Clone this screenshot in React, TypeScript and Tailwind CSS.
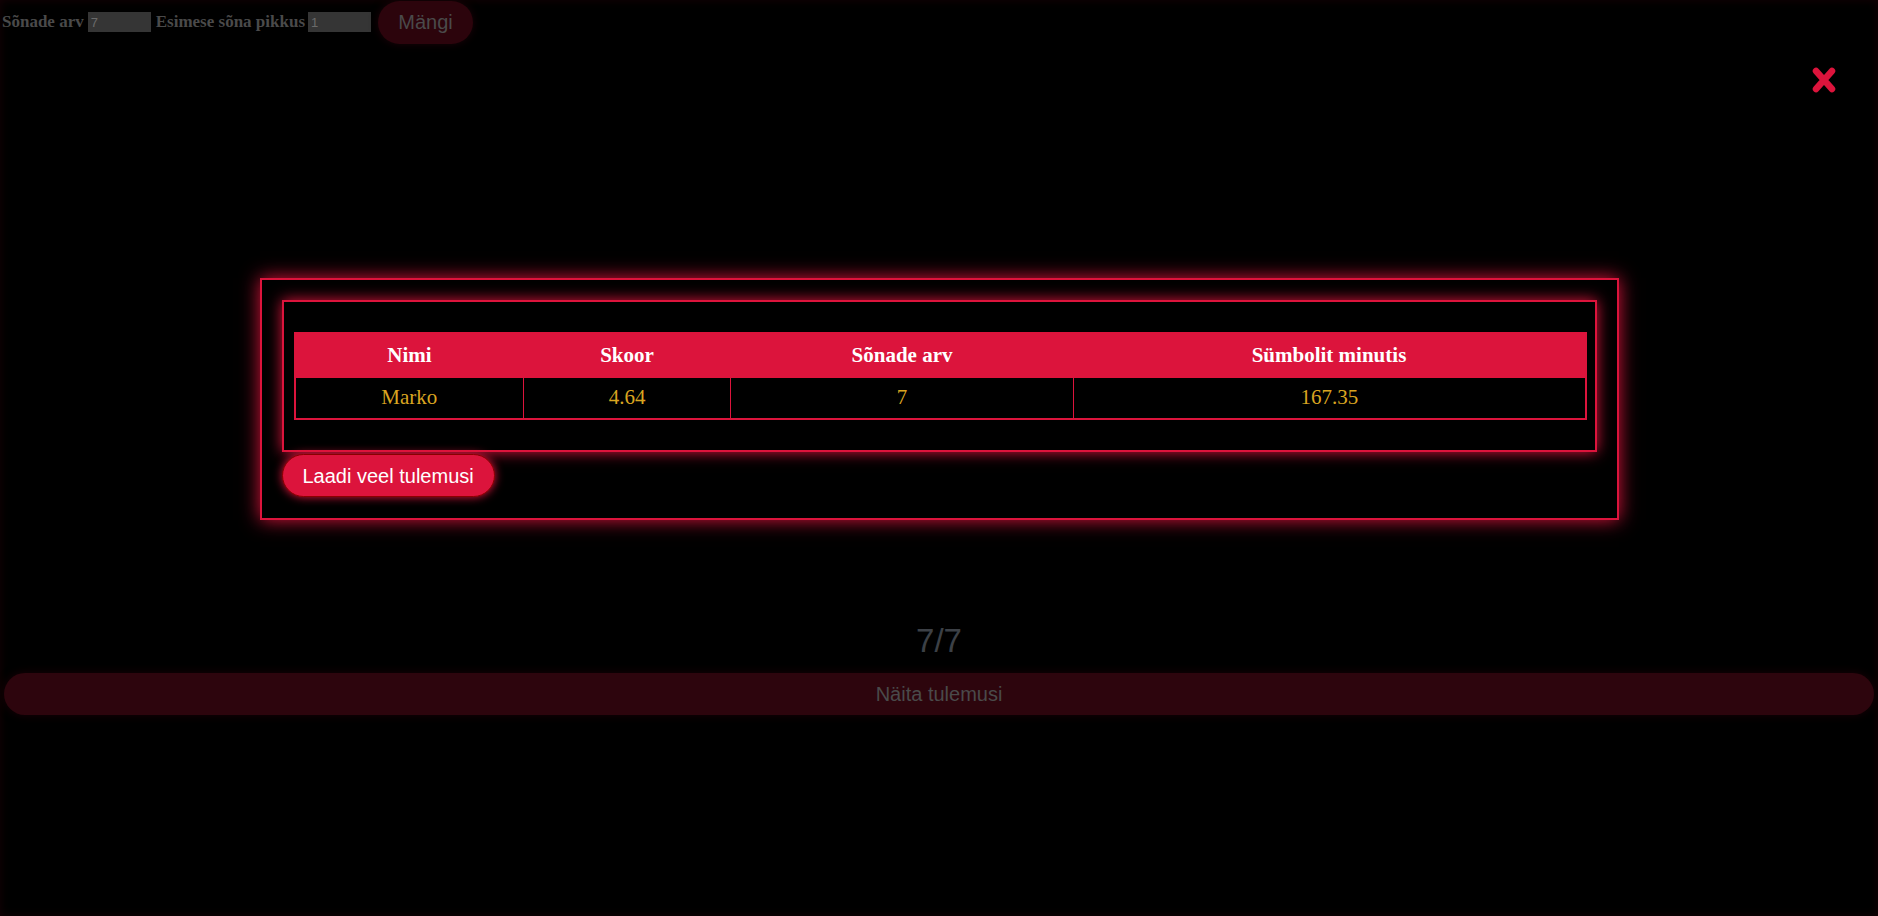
const results = [
  { name: "Marko", score: "4.64", words: "7", cpm: "167.35" },
];

const serif = "font-['Liberation_Serif',serif]";
const sans = "font-['Liberation_Sans',Arial,sans-serif]";

export default function App() {
  return (
    <div className="relative h-[916px] w-full overflow-hidden bg-black shadow-[inset_0_0_10px_#160005]">
      {/* Page behind the modal (already dimmed) */}
      <div className={`flex h-[44px] items-center pl-[2px] ${serif} text-[17px] font-bold text-[#4a4a4a]`}>
        <span>Sõnade arv</span>
        <input
          readOnly
          value="7"
          className={`ml-[4px] h-[20px] w-[63px] bg-[#353535] pl-[3px] ${sans} text-[13px] font-normal text-[#6a6a6a] outline-none`}
        />
        <span className="ml-[5px]">Esimese sõna pikkus</span>
        <input
          readOnly
          value="1"
          className={`ml-[3px] h-[20px] w-[63px] bg-[#353535] pl-[3px] ${sans} text-[13px] font-normal text-[#6a6a6a] outline-none`}
        />
        <button
          className={`ml-[7px] h-[43px] w-[95px] rounded-full bg-[#2c040c] ${sans} text-[20px] font-normal text-[#4a4a4a] shadow-[0_0_8px_#1c0308]`}
        >
          Mängi
        </button>
      </div>

      <div className="h-[576px]" />

      <div className={`flex h-[41px] items-center justify-center ${sans} text-[33px] text-[#3c4046]`}>
        7/7
      </div>

      <div className="mt-[12px] px-[4px]">
        <button
          className={`flex h-[42px] w-full items-center justify-center rounded-full bg-[#2d050d] ${sans} text-[20px] text-[#4a4a4a] shadow-[0_0_10px_#1a0006]`}
        >
          Näita tulemusi
        </button>
      </div>

      {/* Close button */}
      <button className="absolute right-[42px] top-[67px] h-[26px] w-[24px]">
        <svg viewBox="0 0 24 26" className="h-[26px] w-[24px]">
          <path d="M4 4 L20 22 M20 4 L4 22" stroke="#dc143c" strokeWidth={6.5} strokeLinecap="round" fill="none" />
        </svg>
      </button>

      {/* Results modal */}
      <div className="absolute inset-x-0 top-[278px] flex justify-center">
        <div className="w-[1359px] border-2 border-[#dc143c] bg-black p-[20px] shadow-[0_0_18px_#dc143c]">
          <div className="border-2 border-[#dc143c] p-[10px] shadow-[0_0_14px_#dc143c]">
            <table className="my-[20px] w-[1291px] table-fixed border-collapse border-2 border-[#dc143c]">
              <colgroup>
                <col className="w-[229px]" />
                <col className="w-[207px]" />
                <col className="w-[343px]" />
                <col className="w-[512px]" />
              </colgroup>
              <thead>
                <tr className={`h-[44px] bg-[#dc143c] ${serif} text-[21px] font-bold text-white`}>
                  <th>Nimi</th>
                  <th>Skoor</th>
                  <th>Sõnade arv</th>
                  <th>Sümbolit minutis</th>
                </tr>
              </thead>
              <tbody>
                {results.map((r) => (
                  <tr key={r.name} className={`h-[42px] ${serif} text-[21px] text-[#daa520]`}>
                    <td className="border border-[#dc143c] text-center">{r.name}</td>
                    <td className="border border-[#dc143c] text-center">{r.score}</td>
                    <td className="border border-[#dc143c] text-center">{r.words}</td>
                    <td className="border border-[#dc143c] text-center">{r.cpm}</td>
                  </tr>
                ))}
              </tbody>
            </table>
          </div>
          <button
            className={`mb-[1px] mt-[2px] h-[43px] rounded-full border border-[#8b0000] bg-[#dc143c] px-[20px] ${sans} text-[20px] text-white shadow-[0_0_10px_#dc143c]`}
          >
            Laadi veel tulemusi
          </button>
        </div>
      </div>
    </div>
  );
}
